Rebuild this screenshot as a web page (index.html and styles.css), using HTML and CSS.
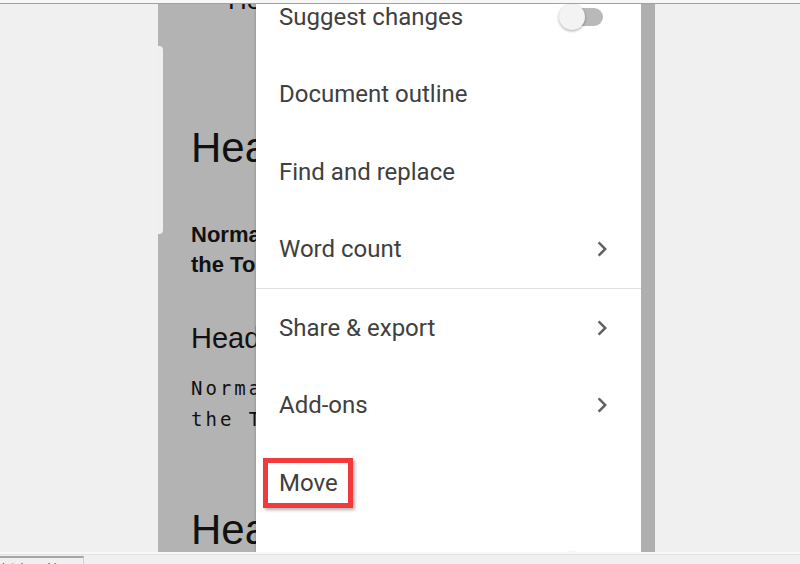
FILE: index.html
```html
<!DOCTYPE html>
<html lang="en">
<head>
  <meta charset="UTF-8">
  <title>Docs menu</title>
  <link rel="stylesheet" href="styles.css">
</head>
<body>

  <div class="topbar"></div>

  <div class="stage">
    <div class="gutter"></div>

    <div class="phone">
      <!-- dimmed document behind the drawer -->
      <div class="doc">
        <div class="doc-tab"></div>
        <div class="doc-text">
          <div class="doc-title">Heading</div>
          <div class="doc-h1">Heading 1</div>
          <div class="doc-bold">Normal text<br>the Top</div>
          <div class="doc-h2">Heading 2</div>
          <div class="doc-mono">Normal text<br>the Top</div>
          <div class="doc-h1 last">Heading 3</div>
        </div>
      </div>

      <div class="menu">
        <ul class="menu-list">
          <li class="menu-item">
            <span>Suggest changes</span>
            <span class="toggle"><span class="track"></span><span class="thumb"></span></span>
          </li>
          <li class="menu-item"><span>Document outline</span></li>
          <li class="menu-item"><span>Find and replace</span></li>
          <li class="menu-item">
            <span>Word count</span>
            <svg class="chevron" viewBox="0 0 24 24"><path d="M10 6L8.59 7.41 13.17 12l-4.58 4.59L10 18l6-6z"/></svg>
          </li>
          <li class="menu-divider"></li>
          <li class="menu-item">
            <span>Share &amp; export</span>
            <svg class="chevron" viewBox="0 0 24 24"><path d="M10 6L8.59 7.41 13.17 12l-4.58 4.59L10 18l6-6z"/></svg>
          </li>
          <li class="menu-item">
            <span>Add-ons</span>
            <svg class="chevron" viewBox="0 0 24 24"><path d="M10 6L8.59 7.41 13.17 12l-4.58 4.59L10 18l6-6z"/></svg>
          </li>
          <li class="menu-item"><span class="marked">Move</span></li>
          <li class="menu-item next">
            <span>Print layout</span>
            <span class="toggle"><span class="track"></span><span class="thumb"></span></span>
          </li>
        </ul>
      </div>

      <div class="edge"></div>
    </div>
  </div>

  <div class="statusbar">
    <div class="status-tab">Intel graphics</div>
  </div>

</body>
</html>
```

FILE: styles.css
```css
body {
  margin: 0;
  height: 564px;
  overflow: hidden;
  background: #f0f0f0;
  display: flex;
  flex-direction: column;
  font-family: Roboto, "Liberation Sans", sans-serif;
}

.topbar {
  height: 3px;
  background: #f7f7f7;
  border-bottom: 1px solid #a2a2a2;
  flex-shrink: 0;
}

.stage {
  height: 548px;
  display: flex;
  flex-shrink: 0;
}

.gutter {
  width: 158px;
  flex-shrink: 0;
}

.phone {
  width: 497px;
  display: flex;
  overflow: hidden;
  flex-shrink: 0;
}

/* document, greyed out by the open drawer */
.doc {
  width: 98px;
  flex-shrink: 0;
  background: #b3b3b3;
  display: flex;
  overflow: hidden;
}

.doc-tab {
  width: 5px;
  height: 188px;
  margin-top: 42px;
  background: #efefef;
  border-radius: 0 4px 4px 0;
  flex-shrink: 0;
}

.doc-text {
  padding-left: 28px;
  white-space: nowrap;
  color: #111;
  font-family: "Liberation Sans", Arial, sans-serif;
}

.doc-title {
  font-size: 26px;
  line-height: 30px;
  margin-top: -19px;
  padding-left: 37px;
}

.doc-h1 {
  font-size: 42px;
  line-height: 48px;
  margin-top: 109px;
}

.doc-bold {
  font-size: 22px;
  font-weight: bold;
  line-height: 30px;
  margin-top: 48px;
}

.doc-h2 {
  font-size: 29px;
  line-height: 36px;
  margin-top: 40px;
}

.doc-mono {
  font-family: "DejaVu Sans Mono", monospace;
  font-size: 19px;
  letter-spacing: 3px;
  line-height: 31px;
  margin-top: 17px;
}

.doc-h1.last {
  margin-top: 71px;
}

/* side drawer */
.menu {
  width: 385px;
  flex-shrink: 0;
  background: #fff;
  box-shadow: -1px 0 2px rgba(0,0,0,0.15);
  overflow: hidden;
}

.menu-list {
  list-style: none;
  margin: -26px 0 0;
  padding: 0;
}

.menu-item {
  height: 77.5px;
  display: flex;
  align-items: center;
  justify-content: space-between;
  padding: 0 24px 0 23px;
  font-size: 24px;
  color: #404040;
}

.menu-item.next {
  margin-top: 5px;
}

.menu-divider {
  height: 1px;
  background: #e0e0e0;
}

.chevron {
  width: 30px;
  height: 30px;
  fill: #616161;
}

.toggle {
  position: relative;
  width: 44px;
  height: 26px;
  margin-right: 14px;
}

.toggle .track {
  position: absolute;
  left: 3px;
  right: 0;
  top: 4px;
  height: 18px;
  border-radius: 9px;
  background: #b9b9b9;
}

.toggle .thumb {
  position: absolute;
  left: 0;
  top: 0;
  width: 26px;
  height: 26px;
  border-radius: 50%;
  background: #f3f3f3;
  box-shadow: 0 1px 3px rgba(0,0,0,0.35);
}

.marked {
  display: inline-block;
  line-height: 40px;
  padding: 0 10px 0 11px;
  margin-left: -16px;
  border: 5px solid #ef3b3b;
  box-shadow: 2px 2px 3px rgba(0,0,0,0.3);
}

.edge {
  width: 14px;
  flex-shrink: 0;
  background: #afafaf;
}

.statusbar {
  flex: 1;
  background: #f0f0f0;
  border-top: 2px solid #f8f8f8;
  box-shadow: inset 0 1px 0 #e2e2e2;
  padding-top: 2px;
}

.status-tab {
  width: 81px;
  border-top: 2px solid #a6a6a6;
  border-right: 1px solid #d2d2d2;
  font-size: 11px;
  line-height: 14px;
  padding: 3px 0 0 2px;
  color: #444;
  white-space: nowrap;
  overflow: hidden;
}
```
